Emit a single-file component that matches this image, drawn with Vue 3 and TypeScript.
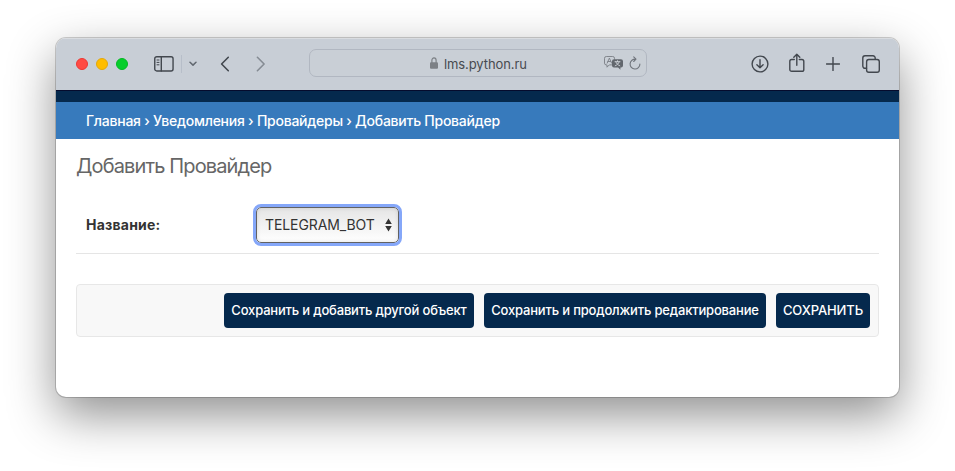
<script setup lang="ts">
import { ref } from 'vue'

const crumbs: string[] = ['Главная', 'Уведомления', 'Провайдеры', 'Добавить Провайдер']
const providers: string[] = ['TELEGRAM_BOT']
const provider = ref<string>(providers[0])
</script>

<template>
  <main class="desktop">
    <section class="window">
      <header class="toolbar">
        <div class="lights"><i class="close"></i><i class="minimize"></i><i class="expand"></i></div>
        <svg class="sidebar" width="20" height="16" viewBox="0 0 20 16">
          <rect x=".75" y=".75" width="18.3" height="14.2" rx="2" />
          <path d="M7.3 1v14" /><path d="M3 4h2M3 6.4h2M3 8.8h2" stroke-width="1" />
        </svg>
        <span class="divider"></span>
        <svg class="down" width="8" height="6" viewBox="0 0 8 6"><path d="M1 1.2l3 2.9 3-2.9" /></svg>
        <svg class="back" width="10" height="16" viewBox="0 0 10 16"><path d="M8.3 1.3L1.6 8l6.7 6.7" /></svg>
        <svg class="forward" width="10" height="16" viewBox="0 0 10 16"><path d="M1.4 1.3L8.1 8l-6.7 6.7" /></svg>
        <div class="address">
          <svg class="lock" width="8" height="12" viewBox="0 0 8 12">
            <path d="M1.9 6V3.3a2.1 2.4 0 0 1 4.2 0V6" /><rect x="0" y="5.2" width="8" height="6.6" rx="1.1" />
          </svg>
          <span class="url">lms.python.ru</span>
          <svg class="translate" width="20" height="14" viewBox="0 0 20 14">
            <path class="line" d="M8 8.9H5.3L3 11.2V8.9H2.3A1.8 1.8 0 0 1 .5 7.1V2.3A1.8 1.8 0 0 1 2.3.5h6.4a1.8 1.8 0 0 1 1.8 1.8v1" />
            <path class="line" d="M3.2 7.1l2.2-5 2.2 5M4 5.5h2.8" />
            <path class="solid" d="M10 3.2h7a2 2 0 0 1 2 2v4.2a2 2 0 0 1-2 2h-.6v2.3l-2.3-2.3H10a2 2 0 0 1-2-2V5.2a2 2 0 0 1 2-2z" />
            <path class="cut" d="M11 5.7h5M13.5 4.7v1M15.2 5.8c-.7 1.9-2 3.2-4 4M11.8 5.8c.8 1.9 2 3.2 4 4" />
          </svg>
          <svg class="reload" width="12" height="14" viewBox="0 0 12 14"><path d="M6.7 3.2A4.9 4.9 0 1 0 10.9 8M4.7.9L7 3.2 4.7 5.5" /></svg>
        </div>
        <div class="actions">
          <svg width="18" height="18" viewBox="0 0 18 18"><circle cx="9" cy="9" r="7.9" /><path d="M9 4.7v8M5.9 9.7L9 12.8l3.1-3.1" /></svg>
          <svg width="16" height="20" viewBox="0 0 16 20"><path d="M5.3 6.5H2.7A1.9 1.9 0 0 0 .8 8.4v8a1.9 1.9 0 0 0 1.9 1.9h10.2a1.9 1.9 0 0 0 1.9-1.9v-8a1.9 1.9 0 0 0-1.9-1.9h-2.6M7.8 12.2V1.3M4.8 4.2l3-3 3 3" /></svg>
          <svg width="14" height="14" viewBox="0 0 14 14"><path d="M7 .5v13M.5 7h13" /></svg>
          <svg width="18" height="18" viewBox="0 0 18 18"><path d="M4.5 13.3H3A2.2 2.2 0 0 1 .8 11.1V3A2.2 2.2 0 0 1 3 .8h8A2.2 2.2 0 0 1 13.2 3v1.4" /><rect x="4.6" y="4.5" width="12.7" height="12.7" rx="2.2" /></svg>
        </div>
      </header>
      <div class="brand"></div>
      <nav class="crumbs">
        <template v-for="(crumb, index) in crumbs" :key="crumb"><span v-if="index"> › </span><span>{{ crumb }}</span></template>
      </nav>
      <form class="content" @submit.prevent>
        <h1>Добавить Провайдер</h1>
        <div class="field">
          <label for="provider">Название:</label>
          <div class="picker">
            <select id="provider" v-model="provider">
              <option v-for="name in providers" :key="name">{{ name }}</option>
            </select>
            <svg class="arrows" width="7" height="14" viewBox="0 0 7 14"><path d="M3.5.5L6.8 6H.2zM3.5 13.5L6.8 8H.2z" /></svg>
          </div>
        </div>
        <div class="submit">
          <button class="another">Сохранить и добавить другой объект</button>
          <button class="continue">Сохранить и продолжить редактирование</button>
          <button class="save">СОХРАНИТЬ</button>
        </div>
      </form>
    </section>
  </main>
</template>

<style>
body { margin: 0; background: #fff; overflow: hidden; }
</style>

<style scoped>
* { box-sizing: border-box; }
.desktop { width: 955px; height: 471px; padding: 38px 56px 74px; overflow: hidden; font-family: Inter, "Liberation Sans", sans-serif; background: #fff; }
.window { width: 843px; height: 359px; border-radius: 10px; overflow: hidden; background: #fff; box-shadow: 0 0 0 1px rgba(0,0,0,.18), 0 18px 48px rgba(0,0,0,.44); }
svg { display: block; flex: none; fill: none; stroke: #42474e; stroke-width: 1.4; stroke-linecap: round; stroke-linejoin: round; }
.toolbar { height: 52px; display: flex; align-items: center; padding: 0 19px 1px 20px; background: #c8ced6; border-top: 1px solid #d9dce0; }
.lights { display: flex; gap: 8px; }
.lights i { width: 12px; height: 12px; border-radius: 50%; }
.close { background: #ff4b44; border: 1px solid #ed3833; }
.minimize { background: #ffbd00; border: 1px solid #e5a80a; }
.expand { background: #06ce2b; border: 1px solid #04b823; }
.sidebar { margin: 0 0 1px 26px; }
.divider { width: 1px; height: 18px; margin-left: 7px; background: #b7bec9; }
.down { margin-left: 7px; stroke: #626870; stroke-width: 1.5; }
.back { margin-left: 23px; stroke-width: 1.6; }
.forward { margin-left: 26px; stroke: #858b93; stroke-width: 1.6; }
.address { width: 338px; height: 28px; margin: 0 0 2px 43px; padding: 0 5px 0 120px; display: flex; align-items: center; border: 1px solid #b1b7c1; border-radius: 7px; background: #c9cfd6; }
.lock { stroke: #7c8085; stroke-width: 1.2; }
.lock rect { fill: #7c8085; stroke: none; }
.url { margin: 2px auto 0 6px; font-size: 13px; line-height: 18px; letter-spacing: -.1px; color: #474b50; white-space: nowrap; }
.translate { margin-right: 5px; stroke: #797e84; stroke-width: .9; }
.translate .solid { fill: #62676d; stroke: none; }
.translate .cut { stroke: #ced3d8; }
.reload { stroke: #70757c; stroke-width: 1.1; }
.actions { display: flex; align-items: center; gap: 21px; margin-left: auto; margin-bottom: 1px; }
.actions svg:nth-child(2) { margin: -2px 0 0 -1px; }
.actions svg:nth-child(4) { margin-left: 1px; }
.brand { height: 12px; background: #05294d; border-top: 1px solid #050b2d; }
.crumbs { height: 37px; padding: 0 30px; background: #377abc; color: #fff; font-size: 14px; line-height: 38px; font-weight: 500; letter-spacing: -.25px; white-space: pre; }
.content { padding: 15px 20px 0; }
h1 { margin: 0 0 1px; font-size: 20px; line-height: 24px; font-weight: 400; letter-spacing: -.86px; color: #666; white-space: nowrap; }
.field { height: 75px; display: flex; align-items: center; padding: 17px 10px 0; border-bottom: 1px solid #e5e5e5; }
label { width: 170px; font-size: 14px; line-height: 20px; font-weight: 700; letter-spacing: .22px; color: #333; }
.picker { position: relative; }
select { display: block; appearance: none; width: 143px; height: 36px; margin: 0; padding: 0 8px; border: 1px solid #626262; border-radius: 5px; outline: 3px solid #85a7f9; outline-offset: 0; background: linear-gradient(#e5e5e5, #fff); box-shadow: inset 0 0 4px rgba(0,0,0,.12); color: #333; font: 14px/20px Inter, "Liberation Sans", sans-serif; letter-spacing: -.1px; }
.arrows { position: absolute; right: 7px; top: 11px; fill: #333; stroke: none; }
.submit { height: 53px; display: flex; align-items: center; justify-content: flex-end; gap: 10px; margin-top: 30px; padding: 0 8px; border: 1px solid #e7e7e7; border-radius: 4px; background: #f8f8f8; }
button { height: 35px; padding: 0 0 1px; border: 0; border-radius: 4px; background: #05294d; color: #fff; font: 500 13px/18px Inter, "Liberation Sans", sans-serif; letter-spacing: -.18px; white-space: nowrap; }
.another { width: 250px; }
.continue { width: 282px; }
.save { width: 94px; letter-spacing: -.1px; }
</style>
